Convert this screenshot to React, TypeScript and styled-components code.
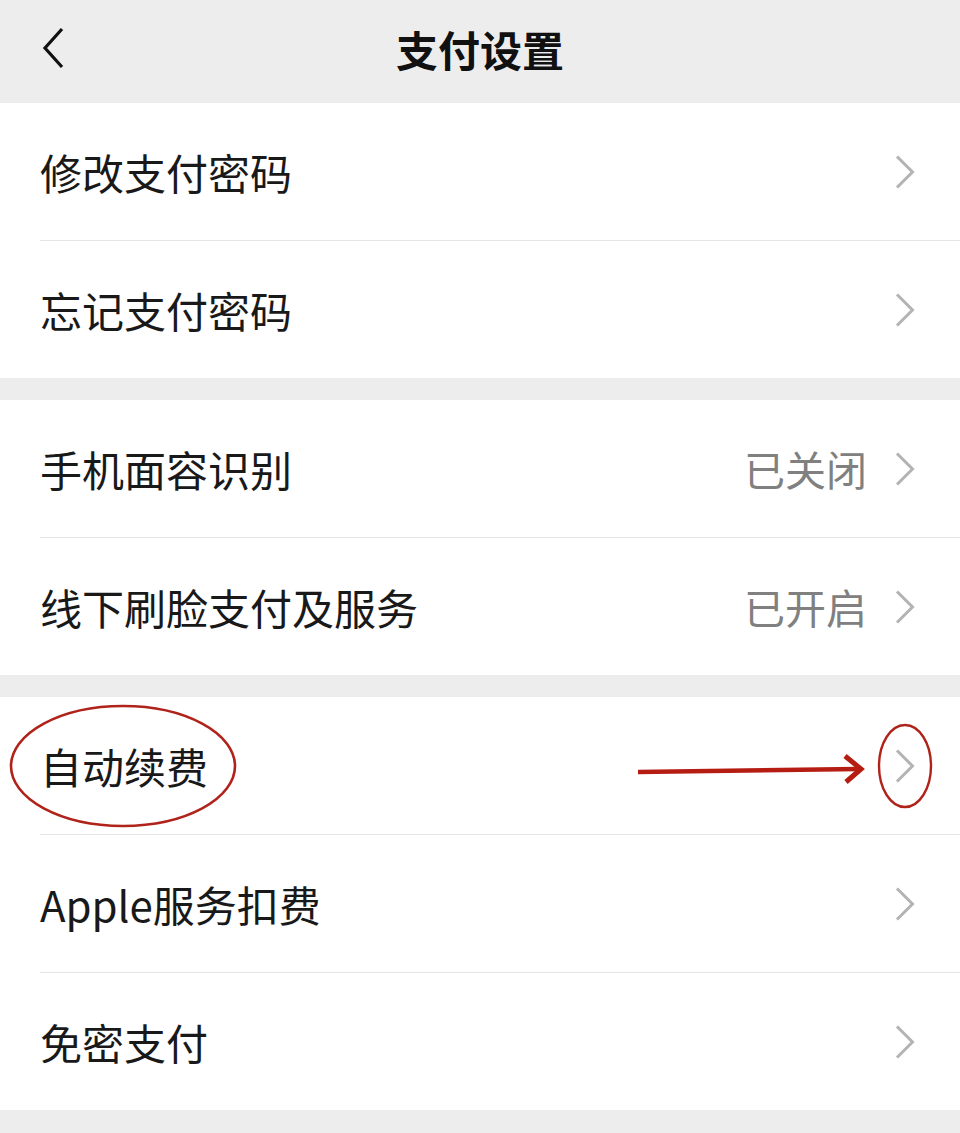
import styled, { createGlobalStyle } from "styled-components";

const GlobalStyle = createGlobalStyle`
  html, body {
    margin: 0;
    padding: 0;
    background: #ededed;
  }
  body {
    font-family: "Noto Sans CJK SC", "Noto Sans", sans-serif;
  }
`;

const Page = styled.div`
  width: 960px;
  min-height: 1133px;
  background: #ededed;
`;

const Header = styled.header`
  height: 103px;
  display: flex;
  align-items: center;
  justify-content: center;
  position: relative;
  background: #ededed;
`;

const BackButton = styled.button`
  position: absolute;
  left: 33px;
  top: 23px;
  width: 40px;
  height: 50px;
  padding: 0;
  border: none;
  background: none;
  display: flex;
  align-items: center;
  justify-content: center;
`;

const Title = styled.h1`
  margin: 0 0 6px;
  font-size: 42px;
  font-weight: 600;
  color: #111111;
  line-height: 1;
`;

const Group = styled.section`
  background: #ffffff;
  margin-bottom: 22px;
`;

const Row = styled.div<{ $last?: boolean }>`
  position: relative;
  height: 137px;
  display: flex;
  align-items: center;
  padding: 0 45px 0 40px;
  &::after {
    content: "";
    display: ${(p) => (p.$last ? "none" : "block")};
    position: absolute;
    left: 40px;
    right: 0;
    bottom: -1px;
    height: 1px;
    background: #e6e6e6;
  }
  & + & {
    margin-top: 1px;
  }
`;

const Label = styled.span`
  flex: 1;
  font-size: 42px;
  color: #191919;
  line-height: 1;
  padding-top: 0;
`;

const Value = styled.span`
  font-size: 41px;
  color: #808080;
  margin-right: 28px;
  line-height: 1;
`;

const Annotation = styled.svg`
  position: absolute;
  left: 0;
  top: 0;
  width: 960px;
  height: 137px;
  pointer-events: none;
`;

const Chevron = () => (
  <svg width="20" height="34" viewBox="0 0 20 34">
    <polyline
      points="2,1.5 17.5,17 2,32.5"
      fill="none"
      stroke="#b3b3b3"
      strokeWidth="3"
    />
  </svg>
);

type Item = { label: string; value?: string; marked?: boolean };

const groups: Item[][] = [
  [{ label: "修改支付密码" }, { label: "忘记支付密码" }],
  [
    { label: "手机面容识别", value: "已关闭" },
    { label: "线下刷脸支付及服务", value: "已开启" },
  ],
  [{ label: "自动续费", marked: true }, { label: "Apple服务扣费" }, { label: "免密支付" }],
];

function App() {
  return (
    <Page>
      <GlobalStyle />
      <Header>
        <BackButton>
          <svg width="30" height="44" viewBox="0 0 30 44">
            <polyline points="24,3 7,22 24,41" fill="none" stroke="#111" strokeWidth="3.2" />
          </svg>
        </BackButton>
        <Title>支付设置</Title>
      </Header>
      {groups.map((items, gi) => (
        <Group key={gi}>
          {items.map((item, i) => (
            <Row key={item.label} $last={i === items.length - 1}>
              <Label>{item.label}</Label>
              {item.value && <Value>{item.value}</Value>}
              <Chevron />
              {item.marked && (
                <Annotation viewBox="0 0 960 137">
                  <ellipse cx="123" cy="69" rx="112" ry="60" fill="none" stroke="#b0231a" strokeWidth="2.6" />
                  <line x1="638" y1="75" x2="858" y2="72" stroke="#b51d12" strokeWidth="4.5" />
                  <polyline points="845,59 861,72 846,85" fill="none" stroke="#b51d12" strokeWidth="5" />
                  <ellipse cx="905" cy="69" rx="26" ry="41" fill="none" stroke="#b0231a" strokeWidth="2.4" />
                </Annotation>
              )}
            </Row>
          ))}
        </Group>
      ))}
    </Page>
  );
}

export default App;
